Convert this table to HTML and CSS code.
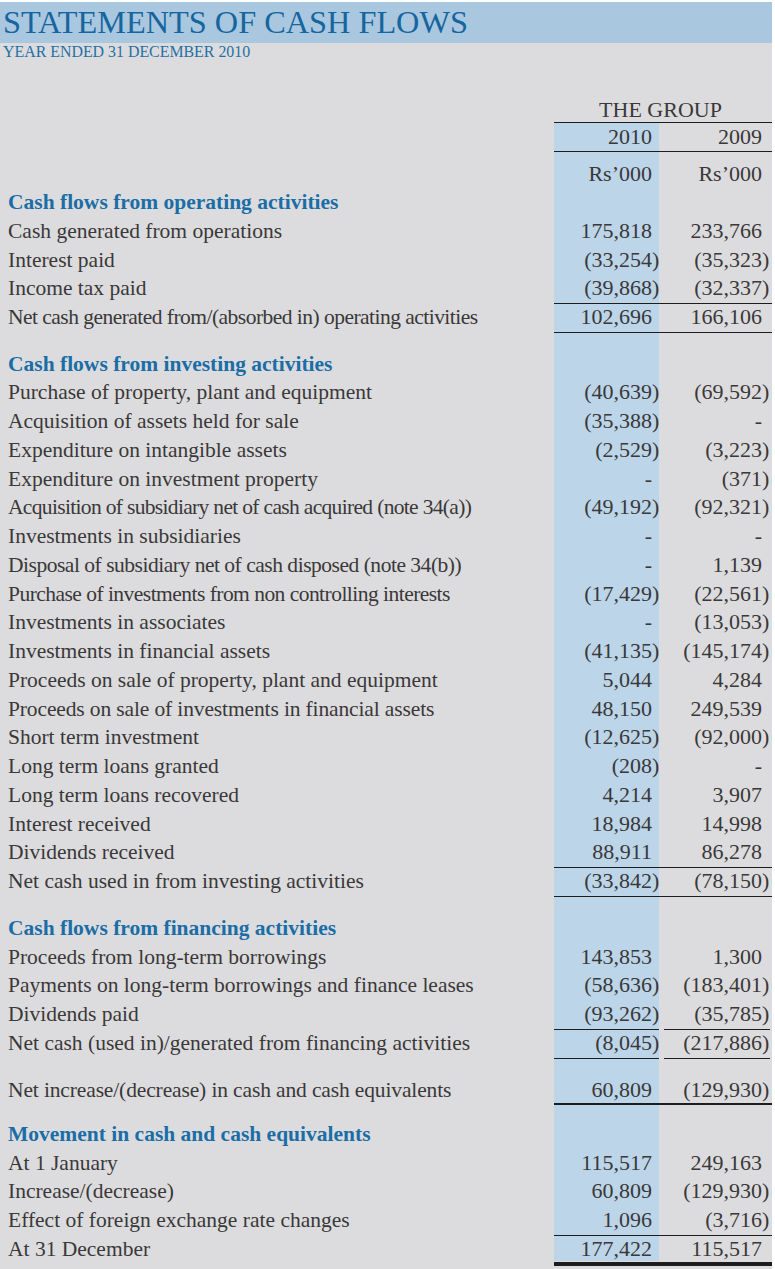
FILE: index.html
```html
<!DOCTYPE html>
<html lang="en">
<head>
<meta charset="utf-8">
<title>Statements of Cash Flows</title>
<link rel="stylesheet" href="styles.css">
</head>
<body>
<div class="page">
  <header class="band"><h1 class="title">STATEMENTS OF CASH FLOWS</h1></header>
  <p class="subtitle">YEAR ENDED 31 DECEMBER 2010</p>

  <div class="group-row"><div></div><div class="group">THE GROUP</div></div>

  <div class="statement">
    <div class="row years"><div class="label"></div><div class="num">2010</div><div class="num">2009</div></div>
    <div class="row units"><div class="label"></div><div class="num">Rs’000</div><div class="num">Rs’000</div></div>

    <div class="row head"><div class="label">Cash flows from operating activities</div><div></div><div></div></div>
    <div class="row"><div class="label">Cash generated from operations</div><div class="num">175,818</div><div class="num">233,766</div></div>
    <div class="row"><div class="label">Interest paid</div><div class="num">(33,254<span class="cp">)</span></div><div class="num">(35,323<span class="cp">)</span></div></div>
    <div class="row ruled"><div class="label">Income tax paid</div><div class="num">(39,868<span class="cp">)</span></div><div class="num">(32,337<span class="cp">)</span></div></div>
    <div class="row ruled"><div class="label tight-md">Net cash generated from/(absorbed in) operating activities</div><div class="num">102,696</div><div class="num">166,106</div></div>
    <div class="spacer"></div>

    <div class="row head"><div class="label">Cash flows from investing activities</div><div></div><div></div></div>
    <div class="row"><div class="label">Purchase of property, plant and equipment</div><div class="num">(40,639<span class="cp">)</span></div><div class="num">(69,592<span class="cp">)</span></div></div>
    <div class="row"><div class="label">Acquisition of assets held for sale</div><div class="num">(35,388<span class="cp">)</span></div><div class="num">-</div></div>
    <div class="row"><div class="label">Expenditure on intangible assets</div><div class="num">(2,529<span class="cp">)</span></div><div class="num">(3,223<span class="cp">)</span></div></div>
    <div class="row"><div class="label">Expenditure on investment property</div><div class="num">-</div><div class="num">(371<span class="cp">)</span></div></div>
    <div class="row"><div class="label tight-lg">Acquisition of subsidiary net of cash acquired (note 34(a))</div><div class="num">(49,192<span class="cp">)</span></div><div class="num">(92,321<span class="cp">)</span></div></div>
    <div class="row"><div class="label">Investments in subsidiaries</div><div class="num">-</div><div class="num">-</div></div>
    <div class="row"><div class="label tight-sm">Disposal of subsidiary net of cash disposed (note 34(b))</div><div class="num">-</div><div class="num">1,139</div></div>
    <div class="row"><div class="label tight-md">Purchase of investments from non controlling interests</div><div class="num">(17,429<span class="cp">)</span></div><div class="num">(22,561<span class="cp">)</span></div></div>
    <div class="row"><div class="label">Investments in associates</div><div class="num">-</div><div class="num">(13,053<span class="cp">)</span></div></div>
    <div class="row"><div class="label">Investments in financial assets</div><div class="num">(41,135<span class="cp">)</span></div><div class="num">(145,174<span class="cp">)</span></div></div>
    <div class="row"><div class="label">Proceeds on sale of property, plant and equipment</div><div class="num">5,044</div><div class="num">4,284</div></div>
    <div class="row"><div class="label tight-xs">Proceeds on sale of investments in financial assets</div><div class="num">48,150</div><div class="num">249,539</div></div>
    <div class="row"><div class="label">Short term investment</div><div class="num">(12,625<span class="cp">)</span></div><div class="num">(92,000<span class="cp">)</span></div></div>
    <div class="row"><div class="label">Long term loans granted</div><div class="num">(208<span class="cp">)</span></div><div class="num">-</div></div>
    <div class="row"><div class="label">Long term loans recovered</div><div class="num">4,214</div><div class="num">3,907</div></div>
    <div class="row"><div class="label">Interest received</div><div class="num">18,984</div><div class="num">14,998</div></div>
    <div class="row ruled"><div class="label">Dividends received</div><div class="num">88,911</div><div class="num">86,278</div></div>
    <div class="row ruled"><div class="label">Net cash used in from investing activities</div><div class="num">(33,842<span class="cp">)</span></div><div class="num">(78,150<span class="cp">)</span></div></div>
    <div class="spacer"></div>

    <div class="row head"><div class="label">Cash flows from financing activities</div><div></div><div></div></div>
    <div class="row"><div class="label">Proceeds from long-term borrowings</div><div class="num">143,853</div><div class="num">1,300</div></div>
    <div class="row"><div class="label">Payments on long-term borrowings and finance leases</div><div class="num">(58,636<span class="cp">)</span></div><div class="num">(183,401<span class="cp">)</span></div></div>
    <div class="row ruled split"><div class="label">Dividends paid</div><div class="num">(93,262<span class="cp">)</span></div><div class="num">(35,785<span class="cp">)</span></div></div>
    <div class="row ruled split"><div class="label">Net cash (used in)/generated from financing activities</div><div class="num">(8,045<span class="cp">)</span></div><div class="num">(217,886<span class="cp">)</span></div></div>
    <div class="spacer"></div>

    <div class="row ruled total"><div class="label tight-xs">Net increase/(decrease) in cash and cash equivalents</div><div class="num">60,809</div><div class="num">(129,930<span class="cp">)</span></div></div>
    <div class="rule-row"><div></div><div class="thick"></div></div>
    <div class="spacer after-total"></div>

    <div class="row head"><div class="label">Movement in cash and cash equivalents</div><div></div><div></div></div>
    <div class="row"><div class="label">At 1 January</div><div class="num">115,517</div><div class="num">249,163</div></div>
    <div class="row"><div class="label">Increase/(decrease)</div><div class="num">60,809</div><div class="num">(129,930<span class="cp">)</span></div></div>
    <div class="row ruled"><div class="label">Effect of foreign exchange rate changes</div><div class="num">1,096</div><div class="num">(3,716<span class="cp">)</span></div></div>
    <div class="row ruled total"><div class="label">At 31 December</div><div class="num">177,422</div><div class="num">115,517</div></div>
  </div>
  <div class="rule-row final"><div></div><div class="thick"></div></div>
</div>
</body>
</html>
```

FILE: styles.css
```css
html, body {
  margin: 0;
  padding: 0;
  background: #ffffff;
}

.page {
  width: 772px;
  min-height: 1267px;
  margin-top: 2px;
  background: #dcdcde;
  font-family: "Liberation Serif", "Times New Roman", serif;
  color: #3a3838;
}

.band {
  height: 41px;
  background: #a9c7df;
  display: flex;
  align-items: center;
}

.title {
  margin: 0 0 0 3px;
  font-size: 32.3px;
  font-weight: normal;
  line-height: 1;
  color: #15659e;
}

.subtitle {
  margin: 0 0 0 3px;
  height: 18px;
  line-height: 18px;
  font-size: 15.9px;
  color: #2470a6;
}

.group-row {
  display: grid;
  grid-template-columns: 554px 218px;
  margin-top: 36px;
  height: 26px;
}

.group {
  box-sizing: border-box;
  border-bottom: 1px solid #1d1d1d;
  text-align: center;
  font-size: 22px;
  line-height: 25px;
  padding-right: 5px;
}

.statement {
  background: linear-gradient(to right, transparent 554px, #bcd5e9 554px, #bcd5e9 659px, transparent 659px);
}

.row {
  display: grid;
  grid-template-columns: 554px 105px 113px;
  height: 28.75px;
  line-height: 28.75px;
  box-sizing: border-box;
  white-space: nowrap;
}

.label {
  padding-left: 8px;
  font-size: 21.5px;
}

.tight-xs { letter-spacing: -0.13px; }
.tight-sm { letter-spacing: -0.48px; }
.tight-md { letter-spacing: -0.53px; }
.tight-lg { letter-spacing: -0.67px; }

.num {
  box-sizing: border-box;
  text-align: right;
  font-size: 22px;
  padding-right: 7px;
}

.num + .num {
  padding-right: 10px;
}

.cp {
  display: inline-block;
  width: 0;
}

.years {
  height: 29px;
  line-height: 28px;
}

.years .num {
  border-bottom: 1px solid #1d1d1d;
}

.units {
  height: 36.2px;
  padding-top: 7.5px;
}

.head .label {
  font-weight: bold;
  color: #1b6da6;
}

.ruled .num {
  border-bottom: 1px solid #1d1d1d;
}

.row.total {
  height: 26px;
  line-height: 26px;
}

.row.total .label,
.row.total .num {
  padding-top: 1.5px;
}

.split .num + .num {
  margin-left: 5px;
  margin-right: 2px;
  padding-right: 8px;
}

.spacer {
  height: 17.8px;
}

.spacer.after-total {
  height: 14.5px;
}

.rule-row {
  display: grid;
  grid-template-columns: 554px 218px;
  height: 4px;
}

.thick {
  margin-top: 2px;
  height: 2px;
  background: #1d1d1d;
}

.rule-row.final {
  height: 5px;
}

.rule-row.final .thick {
  height: 3px;
}
```
